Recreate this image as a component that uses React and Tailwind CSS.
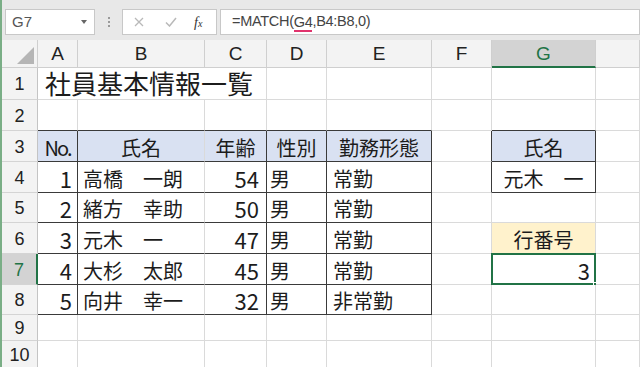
import React from 'react';

const body = [
  [1, '高橋　一朗', 54, '男', '常勤'],
  [2, '緒方　幸助', 50, '男', '常勤'],
  [3, '元木　一', 47, '男', '常勤'],
  [4, '大杉　太郎', 45, '男', '常勤'],
  [5, '向井　幸一', 32, '男', '非常勤'],
];

const jp = "font-['Noto_Sans_CJK_JP',sans-serif]";

// r / b: dark right or bottom edge instead of the plain gridline
const edge = (r, b) =>
  `${r ? 'border-r-[#3a3a3a]' : 'border-r-[#dadada]'} ${b ? 'border-b-[#3a3a3a]' : 'border-b-[#dadada]'}`;

const Cell = ({ r, b, bg = 'bg-white', clip = true, className = '', children }) => (
  <div
    className={`relative flex items-end whitespace-nowrap border-r border-b leading-none pb-[3px] text-[20px] text-[#1c1c1c] ${
      clip ? 'overflow-hidden' : 'overflow-visible'
    } ${jp} ${edge(r, b)} ${bg} ${className}`}
  >
    {children}
  </div>
);

const ColHead = ({ label, active }) => (
  <div
    className={`flex items-center justify-center border-r border-[#cfcfcf] pt-[2px] text-[19px] ${
      active ? 'bg-[#d3d3d3] text-[#217346] border-b-2 border-b-[#217346]' : 'bg-[#f3f3f3] text-[#222] border-b'
    }`}
  >
    {label}
  </div>
);

const RowHead = ({ n, active }) => (
  <div
    className={`flex items-center justify-center border-b border-[#d4d4d4] pt-[2px] text-[18px] ${
      active ? 'bg-[#d3d3d3] text-[#217346] border-r-2 border-r-[#217346]' : 'bg-[#f3f3f3] text-[#222] border-r border-r-[#c4c4c4]'
    }`}
  >
    {n}
  </div>
);

const FormulaBar = () => (
  <div className="flex h-[40px] pt-[9px] pb-[5px] text-[#444]">
    <div className="ml-[3px] flex h-[26px] w-[90px] items-center justify-between border border-[#c8c8c8] bg-white pl-[6px] pr-[7px] text-[15px] text-[#555]">
      <span>G7</span>
      <span className="h-0 w-0 border-x-[3px] border-t-[4px] border-x-transparent border-t-[#666]"></span>
    </div>
    <div className="flex w-[27px] flex-col items-center justify-center gap-[2px]">
      <span className="h-[2px] w-[2px] bg-[#9a9a9a]"></span>
      <span className="h-[2px] w-[2px] bg-[#9a9a9a]"></span>
      <span className="h-[2px] w-[2px] bg-[#9a9a9a]"></span>
    </div>
    <div className="flex h-[26px] w-[95px] items-center border border-[#c8c8c8] bg-white">
      <svg className="ml-[11px]" width="10" height="10" viewBox="0 0 10 10">
        <path d="M1 1 L9 9 M9 1 L1 9" stroke="#b9b9b9" strokeWidth="1.3" fill="none" />
      </svg>
      <svg className="ml-[21px]" width="12" height="10" viewBox="0 0 12 10">
        <path d="M1 5.5 L4.5 9 L11 1" stroke="#b9b9b9" strokeWidth="1.5" fill="none" />
      </svg>
      <span className="ml-[17px] font-['Liberation_Serif',serif] text-[14px] italic text-[#333]">
        f<span className="text-[10px]">x</span>
      </span>
    </div>
    <div className="ml-[3px] flex h-[26px] flex-1 items-center border border-[#c8c8c8] bg-white pl-[11px] text-[14.5px] tracking-[-0.3px] text-[#444]">
      =MATCH(<span className="mt-[3px] border-b-2 border-[#e0336c] leading-[15px]">G4</span>,B4:B8,0)
    </div>
  </div>
);

const Sheet = () => (
  <div className="grid grid-cols-[36px_40px_127px_62px_60px_105px_60px_104px_1fr] grid-rows-[28px_32px_31px_31px_31px_30px_31px_31px_30px_26px_27px] bg-white font-['Liberation_Sans',sans-serif]">
    {/* column headers */}
    <div className="relative border-r border-b border-[#cfcfcf] bg-[#f3f3f3]">
      <svg className="absolute right-[3px] bottom-[3px]" width="17" height="17" viewBox="0 0 17 17">
        <path d="M17 0 L17 17 L0 17 Z" fill="#b5b5b5" />
      </svg>
    </div>
    {['A', 'B', 'C', 'D', 'E', 'F', 'G', ''].map((c) => (
      <ColHead key={c || 'H'} label={c} active={c === 'G'} />
    ))}

    {/* row 1: title spills over A-C */}
    <RowHead n={1} />
    <Cell clip={false} className="col-span-3 pl-[7px] pb-[3px] text-[26px]">
      社員基本情報一覧
    </Cell>
    <Cell />
    <Cell />
    <Cell />
    <Cell />
    <Cell />

    {/* row 2 */}
    <RowHead n={2} />
    <Cell b />
    <Cell b />
    <Cell b />
    <Cell b />
    <Cell b />
    <Cell />
    <Cell b />
    <Cell />

    {/* row 3: headers */}
    <RowHead n={3} />
    <Cell r b bg="bg-[#d9e1f2]" className="justify-center text-[19px] tracking-[-2px]">No.</Cell>
    <Cell b bg="bg-[#d9e1f2]" className="justify-center">氏名</Cell>
    <Cell r b bg="bg-[#d9e1f2]" className="justify-center">年齢</Cell>
    <Cell r b bg="bg-[#d9e1f2]" className="justify-center">性別</Cell>
    <Cell r b bg="bg-[#d9e1f2]" className="justify-center">勤務形態</Cell>
    <Cell r />
    <Cell r b bg="bg-[#d9e1f2]" className="justify-center">氏名</Cell>
    <Cell />

    {body.map(([no, name, age, sex, kind], i) => {
      const row = i + 4;
      return (
        <React.Fragment key={row}>
          <RowHead n={row} active={row === 7} />
          <Cell r b className="justify-end pr-[5px] pb-[3px] text-[22px]">{no}</Cell>
          <Cell b className="pl-[5px]">{name}</Cell>
          <Cell r b className="justify-end pr-[7px] pb-[3px] text-[22px]">{age}</Cell>
          <Cell r b className="pl-[3px]">{sex}</Cell>
          <Cell r b className="pl-[6px]">{kind}</Cell>
          <Cell r={row === 4} />
          {row === 4 && <Cell r b className="justify-center">元木　一</Cell>}
          {row === 5 && <Cell />}
          {row === 6 && <Cell bg="bg-[#fff2cc]" className="justify-center">行番号</Cell>}
          {row === 7 && (
            <div className="relative flex items-end justify-end border-r border-b border-r-[#dadada] border-b-[#dadada] bg-white pr-[5px] pb-[3px] text-[22px] leading-none text-[#1c1c1c] font-['Noto_Sans_CJK_JP',sans-serif]">
              3
              <span className="absolute -left-px -top-px -right-px -bottom-px border-2 border-[#217346]"></span>
              <span className="absolute -right-[4px] -bottom-[4px] h-[6px] w-[6px] border border-white bg-[#217346]"></span>
            </div>
          )}
          {row === 8 && <Cell />}
          <Cell />
        </React.Fragment>
      );
    })}

    {[9, 10].map((row) => (
      <React.Fragment key={row}>
        <RowHead n={row} />
        <Cell />
        <Cell />
        <Cell />
        <Cell />
        <Cell />
        <Cell />
        <Cell />
        <Cell />
      </React.Fragment>
    ))}
  </div>
);

export default function App() {
  return (
    <div className="h-[367px] w-[640px] overflow-hidden border-l-2 border-[#7aae86] bg-[#e8e8e8] font-['Liberation_Sans',sans-serif]">
      <FormulaBar />
      <Sheet />
    </div>
  );
}
